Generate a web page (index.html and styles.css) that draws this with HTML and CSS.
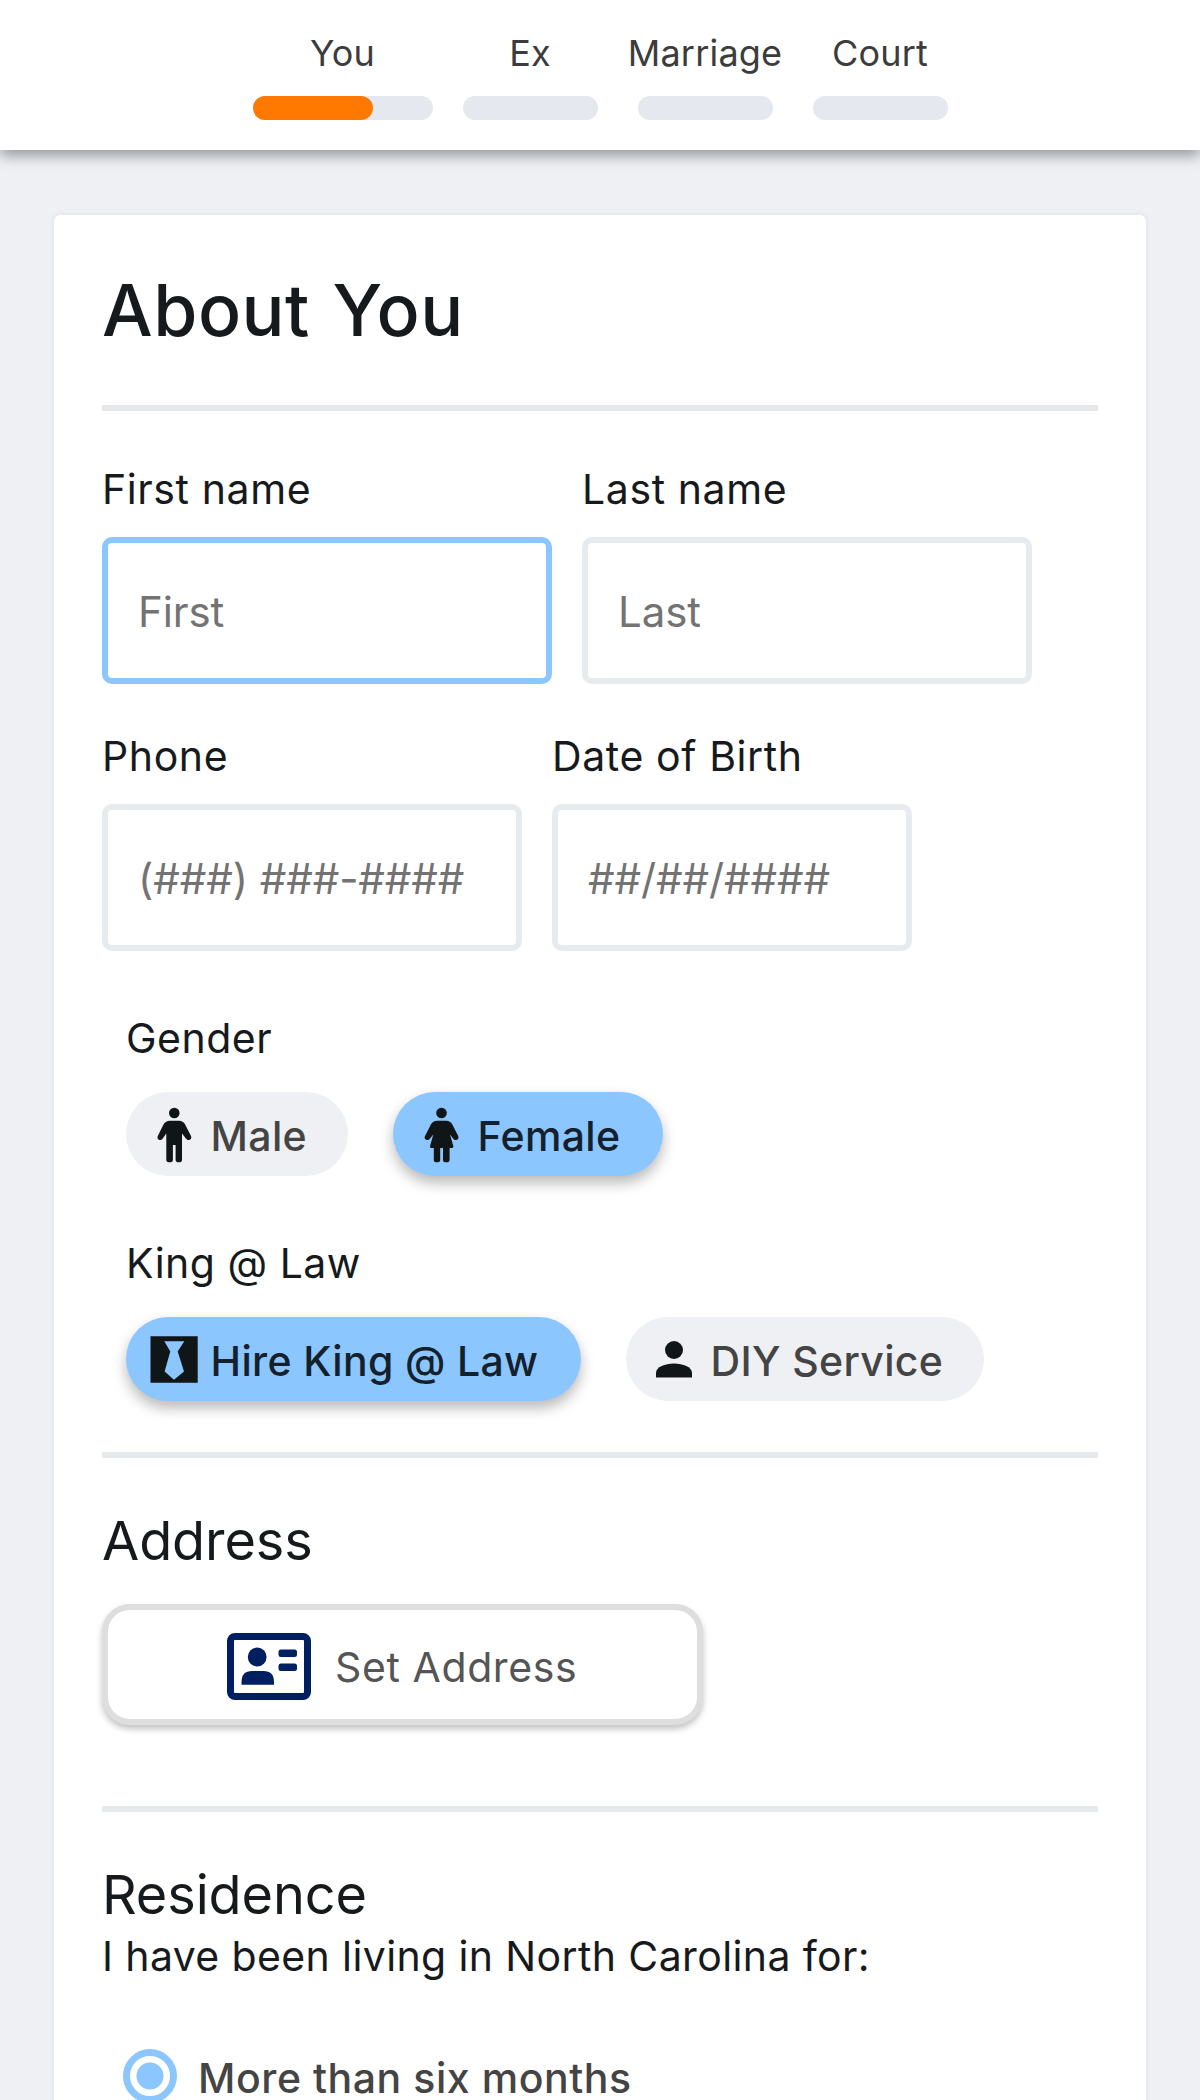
FILE: index.html
```html
<!DOCTYPE html>
<html lang="en">
<head>
<meta charset="utf-8">
<title>About You</title>
<link rel="stylesheet" href="styles.css">
</head>
<body>
<header class="steps">
  <div class="step step-current"><span class="step-name">You</span><div class="bar"><div class="bar-fill" style="width: 66.9%"></div></div></div>
  <div class="step"><span class="step-name">Ex</span><div class="bar"></div></div>
  <div class="step step-wide"><span class="step-name">Marriage</span><div class="bar"></div></div>
  <div class="step"><span class="step-name">Court</span><div class="bar"></div></div>
</header>
<main class="card">
  <h1 class="title">About You</h1>
  <hr class="rule rule-title">
  <form>
    <div class="fields fields-name">
      <label class="field"><span class="label">First name</span><input class="input input-active" type="text" placeholder="First"></label>
      <label class="field"><span class="label">Last name</span><input class="input" type="text" placeholder="Last"></label>
    </div>
    <div class="fields fields-contact">
      <label class="field"><span class="label">Phone</span><input class="input" type="text" placeholder="(###) ###-####"></label>
      <label class="field"><span class="label">Date of Birth</span><input class="input" type="text" placeholder="##/##/####"></label>
    </div>
    <section class="choice">
      <div class="label label-choice">Gender</div>
      <div class="pills">
        <button type="button" class="pill pill-male">
          <svg class="pill-icon" viewBox="0 0 48 84"><circle cx="24.3" cy="21" r="5.3"/><path d="M20 28.700h9q4 0 6 3.600l6 11.600q1 2.600-1.300 3.900-2.300 1-3.800-1.200L32 41.500V68q0 2.300-3.200 2.300T25.600 68V53h-2.700v15q0 2.300-3.300 2.300T16.300 68V41.500l-3.600 5.100q-1.500 2.200-3.700 1.200-2.200-1.300-1.200-3.900L13.600 32.300q2.100-3.600 6.400-3.600z"/></svg>
          <span>Male</span>
        </button>
        <button type="button" class="pill pill-female pill-on">
          <svg class="pill-icon" viewBox="0 0 48 84"><circle cx="24.500" cy="21" r="5.300"/><path d="M20.200 28.700h9q4 0 6 3.600l6 11.600q1 2.600-1.300 3.900-2.300 1-3.800-1.200L33 42.500l3.400 11.700q.3 1.800-1.500 1.800h-2.300v12q0 2.300-3.300 2.300T26 68V56h-2.800v12q0 2.300-3.200 2.300T16.800 68V56h-2.400q-1.800 0-1.400-1.800l3.300-11.700-3.300 4.100q-1.500 2.200-3.800 1.200-2.200-1.300-1.200-3.900l6-11.600q2-3.600 6.200-3.600z"/></svg>
          <span>Female</span>
        </button>
      </div>
    </section>
    <section class="choice">
      <div class="label label-choice">King @ Law</div>
      <div class="pills">
        <button type="button" class="pill pill-hire pill-on">
          <svg class="pill-icon" viewBox="0 0 48 84"><path fill-rule="evenodd" d="M.5 19.300H47.700V65.700H.5zM14.300 24.300L20.300 34.500 14.600 54.500 24 62.800 34 54.500 27.700 34.500 34.300 24.300z"/></svg>
          <span>Hire King @ Law</span>
        </button>
        <button type="button" class="pill pill-diy">
          <svg class="pill-icon" viewBox="0 0 48 84"><circle cx="24" cy="33" r="9"/><path d="M6 60.500V56C6 50 15 46.500 24 46.500S42 50 42 56V60.500z"/></svg>
          <span>DIY Service</span>
        </button>
      </div>
    </section>
    <hr class="rule rule-address">
    <h2 class="subtitle">Address</h2>
    <button type="button" class="address-button">
      <svg class="address-icon" viewBox="0 0 84 67"><rect x="3.500" y="3.500" width="77" height="60" rx="4.500"/><g class="solid"><circle cx="30.200" cy="24" r="9.400"/><path d="M14.500 51.800V49Q14.500 38 25 38H36.500Q47 38 47 49V51.800z"/><rect x="51.500" y="16.500" width="18.500" height="7.500" rx="2.500"/><rect x="51.500" y="30.500" width="18.500" height="7.500" rx="2.500"/></g></svg>
      <span>Set Address</span>
    </button>
    <hr class="rule rule-residence">
    <h2 class="subtitle">Residence</h2>
    <p class="question">I have been living in North Carolina for:</p>
    <label class="radio"><input class="radio-input" type="radio" name="residence" checked><span class="radio-text">More than six months</span></label>
  </form>
</main>
</body>
</html>
```
FILE: styles.css
```css
* { box-sizing: border-box; }

body {
  margin: 0;
  height: 2100px;
  overflow: hidden;
  background: #eef0f4;
  color: #171a1d;
  font-family: Inter, sans-serif;
}

.steps {
  display: flex;
  justify-content: center;
  gap: 30px;
  height: 150px;
  padding-top: 31px;
  background: #fff;
  box-shadow: 0 5px 14px rgba(0, 0, 0, .4);
}
.step {
  display: flex;
  flex-direction: column;
  align-items: center;
  gap: 21px;
  width: 135px;
}
.step-current { width: 180px; }
.step-wide { width: 155px; }
.step-name {
  font-size: 36px;
  line-height: 44px;
  font-weight: 400;
  letter-spacing: .2px;
  color: #3c3c3c;
}
.bar {
  width: 135px;
  height: 24px;
  border-radius: 12px;
  background: #e5e8ee;
}
.step-current .bar { width: 180px; }
.bar-fill {
  height: 24px;
  border-radius: 12px;
  background: #ff7900;
}

.card {
  width: 1092px;
  height: 1960px;
  margin: 65px auto 0;
  padding: 50px 48px 0;
  border-radius: 6px;
  background: #fff;
  box-shadow: 0 0 3px 2px #e5e8ed;
}
.title {
  margin: 0;
  font-size: 71.5px;
  line-height: 90px;
  font-weight: 500;
  letter-spacing: .5px;
  word-spacing: 3px;
}
.rule {
  height: 6px;
  margin: 0;
  border: 0;
  background: #e6e9ec;
}
.rule-title { margin: 50px 0 54px; }
.rule-address { margin: 51px 0 53px; }
.rule-residence { margin: 81px 0 53px; }

.fields { display: grid; column-gap: 30px; }
.fields-name { grid-template-columns: 450px 450px; }
.fields-contact { grid-template-columns: 420px 360px; margin-top: 48px; }
.field {
  display: flex;
  flex-direction: column;
  gap: 24px;
}
.label {
  font-size: 41px;
  line-height: 48px;
  letter-spacing: .6px;
}
.label-choice { letter-spacing: .500px; }
.input {
  width: 100%;
  height: 147px;
  padding: 2px 30px 0;
  border: 6px solid #e8ebee;
  border-radius: 10px;
  outline: 0;
  background: #fff;
  font: 400 42px Inter, sans-serif;
  letter-spacing: -.1px;
}
.input::placeholder { color: #737373; opacity: 1; }
.input-active { border-color: #8bc6fe; }

.choice { margin: 63px 0 0 24px; }
.pills {
  display: flex;
  gap: 45px;
  margin-top: 30px;
}
.pill {
  display: flex;
  align-items: center;
  gap: 12.5px;
  height: 84px;
  padding: 0 0 0 24px;
  border: 0;
  border-radius: 42px;
  background: #eef0f4;
  color: #444;
  font: 500 41px/50px Inter, sans-serif;
  letter-spacing: .35px;
  white-space: nowrap;
}
.pill span { padding-top: 3px; }
.pill-on {
  background: #8bc6fe;
  color: #14202b;
  box-shadow: 0 7px 14px rgba(0, 0, 0, .28);
}
.pill-male { width: 222px; }
.pill-female { width: 270px; }
.pill-hire { width: 455px; }
.pill-diy { width: 358px; }
.pill-icon {
  width: 48px;
  height: 84px;
  flex: none;
  fill: #101518;
}

.subtitle {
  margin: 0;
  font-size: 54px;
  line-height: 60px;
  font-weight: 400;
  letter-spacing: -.1px;
}
.address-button {
  display: flex;
  align-items: center;
  gap: 24px;
  width: 601px;
  height: 121px;
  margin-top: 33px;
  padding: 3px 0 0 119px;
  border: 6px solid #dedede;
  border-radius: 28px;
  background: #fff;
  box-shadow: 0 4px 6px rgba(0, 0, 0, .24);
  color: #555;
  font: 400 41px/50px Inter, sans-serif;
  letter-spacing: .6px;
}
.address-button span { padding-top: 2px; }
.address-icon {
  width: 84px;
  height: 67px;
  fill: none;
  stroke: #001f60;
  stroke-width: 7;
}
.solid { fill: #001f60; stroke: none; }

.question {
  margin: 7px 0 0;
  font-size: 41px;
  line-height: 48px;
  letter-spacing: .38px;
}
.radio {
  display: flex;
  align-items: center;
  gap: 21px;
  margin: 68px 0 0 21px;
}
.radio-input {
  appearance: none;
  width: 54px;
  height: 54px;
  margin: 0;
  border: 7px solid #8bc6fe;
  border-radius: 50%;
  background: radial-gradient(circle, #8bc6fe 13px, #fff 14px);
}
.radio-text {
  padding-top: 6px;
  color: #444;
  font-size: 41px;
  line-height: 49px;
  font-weight: 500;
  letter-spacing: .55px;
}
```
